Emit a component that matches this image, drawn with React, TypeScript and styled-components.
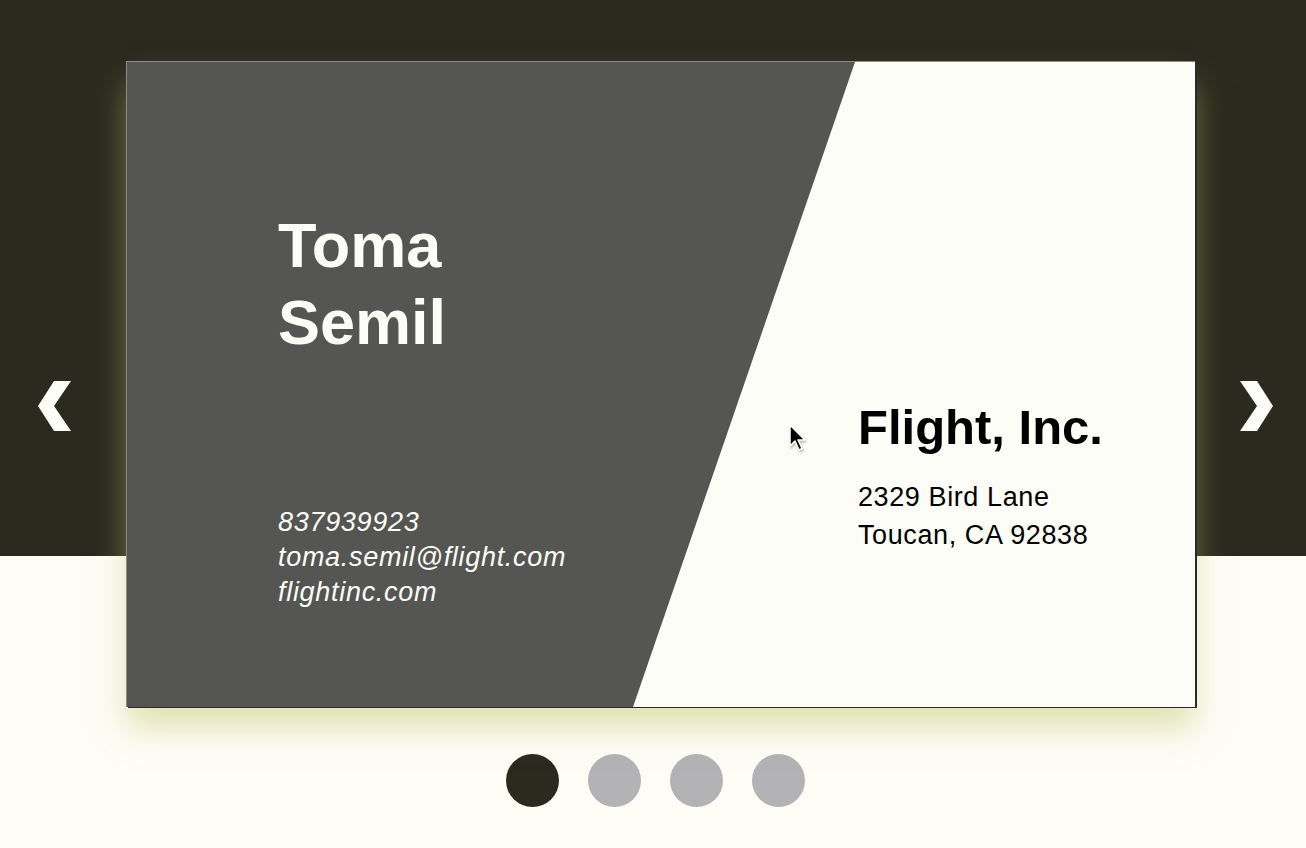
import React from "react";
import styled, { createGlobalStyle } from "styled-components";

const Global = createGlobalStyle`
  html, body { margin: 0; padding: 0; }
  body {
    width: 1306px;
    height: 848px;
    overflow: hidden;
    background: #fdfdf6;
    font-family: "Liberation Sans", Arial, Helvetica, sans-serif;
  }
`;

const Page = styled.div`
  width: 1306px;
  height: 848px;
  background: linear-gradient(to bottom, #2a2a1f 0, #2a2a1f 556px, #fdfdf6 556px);
  display: flex;
  flex-direction: column;
  align-items: stretch;
`;

const Stage = styled.div`
  display: flex;
  align-items: flex-start;
  padding: 61px 0 0 38px;
`;

const ArrowButton = styled.button<{ $gap: number }>`
  flex: none;
  width: 33px;
  height: 50px;
  margin-top: 320px;
  margin-left: ${(p) => p.$gap}px;
  padding: 0;
  border: 0;
  background: transparent;
  cursor: pointer;
  display: block;
  svg { display: block; }
`;

const Card = styled.div`
  position: relative;
  flex: none;
  margin-left: 55px;
  width: 1068px;
  height: 645px;
  background: #fdfdf8;
  border-left: 1px solid #8a8a86;
  border-top: 1px solid #8a8a86;
  box-shadow: 2px 1px 0 #2a2a2a, 0 22px 30px -2px rgba(200, 200, 110, 0.5);
  display: grid;
  grid-template-columns: 731px 1fr;
  &::before {
    content: "";
    position: absolute;
    inset: 0;
    background: #555553;
    clip-path: polygon(0 0, 728px 0, 506px 100%, 0 100%);
  }
`;

const LeftCol = styled.div`
  position: relative;
  padding: 145px 0 0 151px;
  display: flex;
  flex-direction: column;
`;

const Name = styled.h1`
  margin: 0;
  font-size: 63px;
  line-height: 77px;
  font-weight: 700;
  color: #fdfdf8;
`;

const Contacts = styled.div`
  margin-top: 144px;
  display: flex;
  flex-direction: column;
  font-style: italic;
  font-size: 27px;
  line-height: 35px;
  letter-spacing: 0.7px;
  color: #fdfdf8;
`;

const RightCol = styled.div`
  position: relative;
  padding: 337px 0 0 0;
  display: flex;
  flex-direction: column;
`;

const Company = styled.h2`
  margin: 0;
  font-size: 49px;
  line-height: 56px;
  font-weight: 700;
  color: #000;
`;

const Address = styled.div`
  margin-top: 23px;
  display: flex;
  flex-direction: column;
  font-size: 27px;
  line-height: 38px;
  letter-spacing: 0.6px;
  color: #000;
`;

const Cursor = styled.svg`
  position: absolute;
  left: 662px;
  top: 362px;
  filter: drop-shadow(1px 2px 1px rgba(150, 150, 90, 0.6));
`;

const Dots = styled.div`
  display: flex;
  justify-content: center;
  gap: 29px;
  margin-top: 47px;
  padding-left: 4px;
`;

const Dot = styled.button<{ $active?: boolean }>`
  width: 53px;
  height: 53px;
  border-radius: 50%;
  border: 0;
  padding: 0;
  background: ${(p) => (p.$active ? "#2a2a1f" : "#b3b2b5")};
  cursor: pointer;
`;

const Chevron = ({ dir }: { dir: "left" | "right" }) => (
  <svg width="33" height="50" viewBox="0 0 33 50">
    <polygon
      fill="#fdfdf8"
      points={
        dir === "left"
          ? "16,0 33,0 16,25 33,50 16,50 0,25"
          : "0,0 17,0 33,25 17,50 0,50 17,25"
      }
    />
  </svg>
);

export default function App() {
  return (
    <>
      <Global />
      <Page>
        <Stage>
          <ArrowButton $gap={0} aria-label="previous">
            <Chevron dir="left" />
          </ArrowButton>
          <Card>
            <LeftCol>
              <Name>
                Toma
                <br />
                Semil
              </Name>
              <Contacts>
                <span>837939923</span>
                <span>toma.semil@flight.com</span>
                <span>flightinc.com</span>
              </Contacts>
            </LeftCol>
            <RightCol>
              <Company>Flight, Inc.</Company>
              <Address>
                <span>2329 Bird Lane</span>
                <span>Toucan, CA 92838</span>
              </Address>
            </RightCol>
            <Cursor width="18" height="28" viewBox="0 0 18 28">
              <path
                d="M1 1 L1 22 L6 17 L10 26 L13 24.5 L9 16 L16 16 Z"
                fill="#000"
                stroke="#fff"
                strokeWidth="1.5"
                strokeLinejoin="round"
              />
            </Cursor>
          </Card>
          <ArrowButton $gap={45} aria-label="next">
            <Chevron dir="right" />
          </ArrowButton>
        </Stage>
        <Dots>
          <Dot $active aria-label="slide 1" />
          <Dot aria-label="slide 2" />
          <Dot aria-label="slide 3" />
          <Dot aria-label="slide 4" />
        </Dots>
      </Page>
    </>
  );
}
